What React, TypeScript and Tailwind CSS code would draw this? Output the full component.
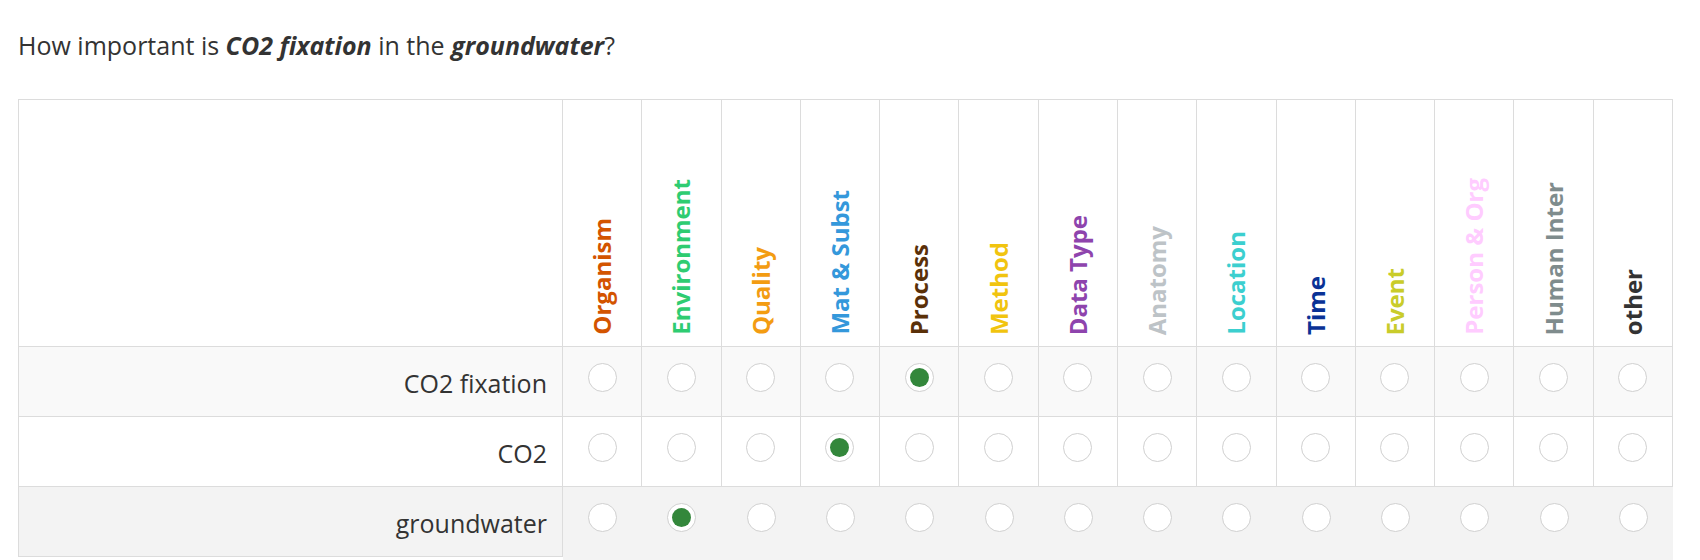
import React from 'react';

interface Category {
  name: string;
  color: string;
}

const categories: Category[] = [
  { name: 'Organism', color: 'text-[#d35400]' },
  { name: 'Environment', color: 'text-[#2ecc71]' },
  { name: 'Quality', color: 'text-[#f39c12]' },
  { name: 'Mat & Subst', color: 'text-[#3498db]' },
  { name: 'Process', color: 'text-[#5a3008]' },
  { name: 'Method', color: 'text-[#f1c40f]' },
  { name: 'Data Type', color: 'text-[#8e44ad]' },
  { name: 'Anatomy', color: 'text-[#bdc3c7]' },
  { name: 'Location', color: 'text-[#3ccfcf]' },
  { name: 'Time', color: 'text-[#0a3296]' },
  { name: 'Event', color: 'text-[#c9cc2a]' },
  { name: 'Person & Org', color: 'text-[#ffccff]' },
  { name: 'Human Inter', color: 'text-[#7f8c8d]' },
  { name: 'other', color: 'text-[#333333]' },
];

const terms = [
  { label: 'CO2 fixation', selected: 4 },
  { label: 'CO2', selected: 3 },
  { label: 'groundwater', selected: 1 },
];

const Radio = ({ checked }: { checked: boolean }) => (
  <span className="w-[29px] h-[29px] rounded-full border border-[#d0d0d0] bg-white flex items-center justify-center">
    {checked && <span className="w-[19px] h-[19px] rounded-full bg-[#33873b]" />}
  </span>
);

const App = () => {
  const [answers, setAnswers] = React.useState(terms.map((t) => t.selected));
  const hovered = 2;

  return (
    <div className="min-h-[560px] bg-white text-[#333333] font-['Open_Sans','Noto_Sans',sans-serif]">
      <p className="pl-[18px] pt-[27px] text-[25px] leading-[36px]">
        How important is <b className="italic">CO2 fixation</b> in the <b className="italic">groundwater</b>?
      </p>

      <div className="ml-[18px] mt-[36px] w-[1655px] grid grid-cols-[545px_repeat(14,minmax(0,1fr))]">
        <div className="h-[248px] border-t border-l border-r border-b border-[#dcdcdc]" />
        {categories.map((c) => (
          <div
            key={c.name}
            className="h-[248px] border-t border-r border-b border-[#dcdcdc] flex items-end justify-center pb-[11px]"
          >
            <span
              className={`[writing-mode:vertical-rl] rotate-180 whitespace-nowrap text-[24px] leading-[28px] font-bold ${c.color}`}
            >
              {c.name}
            </span>
          </div>
        ))}

        {terms.map((term, r) => {
          const isHover = r === hovered;
          const rowBg = isHover ? 'bg-[#f3f3f3]' : r % 2 === 0 ? 'bg-[#f9f9f9]' : 'bg-white';
          return (
            <React.Fragment key={term.label}>
              <div
                className={`h-[70px] self-start border-l border-r border-b border-[#dcdcdc] flex items-center justify-end pr-[15px] pt-[2px] text-[25px] leading-[36px] ${rowBg}`}
              >
                {term.label}
              </div>
              {categories.map((c, i) => (
                <label
                  key={c.name}
                  className={`flex justify-center pt-[16px] cursor-pointer ${rowBg} ${
                    isHover ? 'h-[80px]' : 'h-[70px] border-r border-b border-[#dcdcdc]'
                  }`}
                  onClick={() =>
                    setAnswers((prev) => prev.map((v, idx) => (idx === r ? i : v)))
                  }
                >
                  <Radio checked={answers[r] === i} />
                </label>
              ))}
            </React.Fragment>
          );
        })}
      </div>
    </div>
  );
};

export default App;
